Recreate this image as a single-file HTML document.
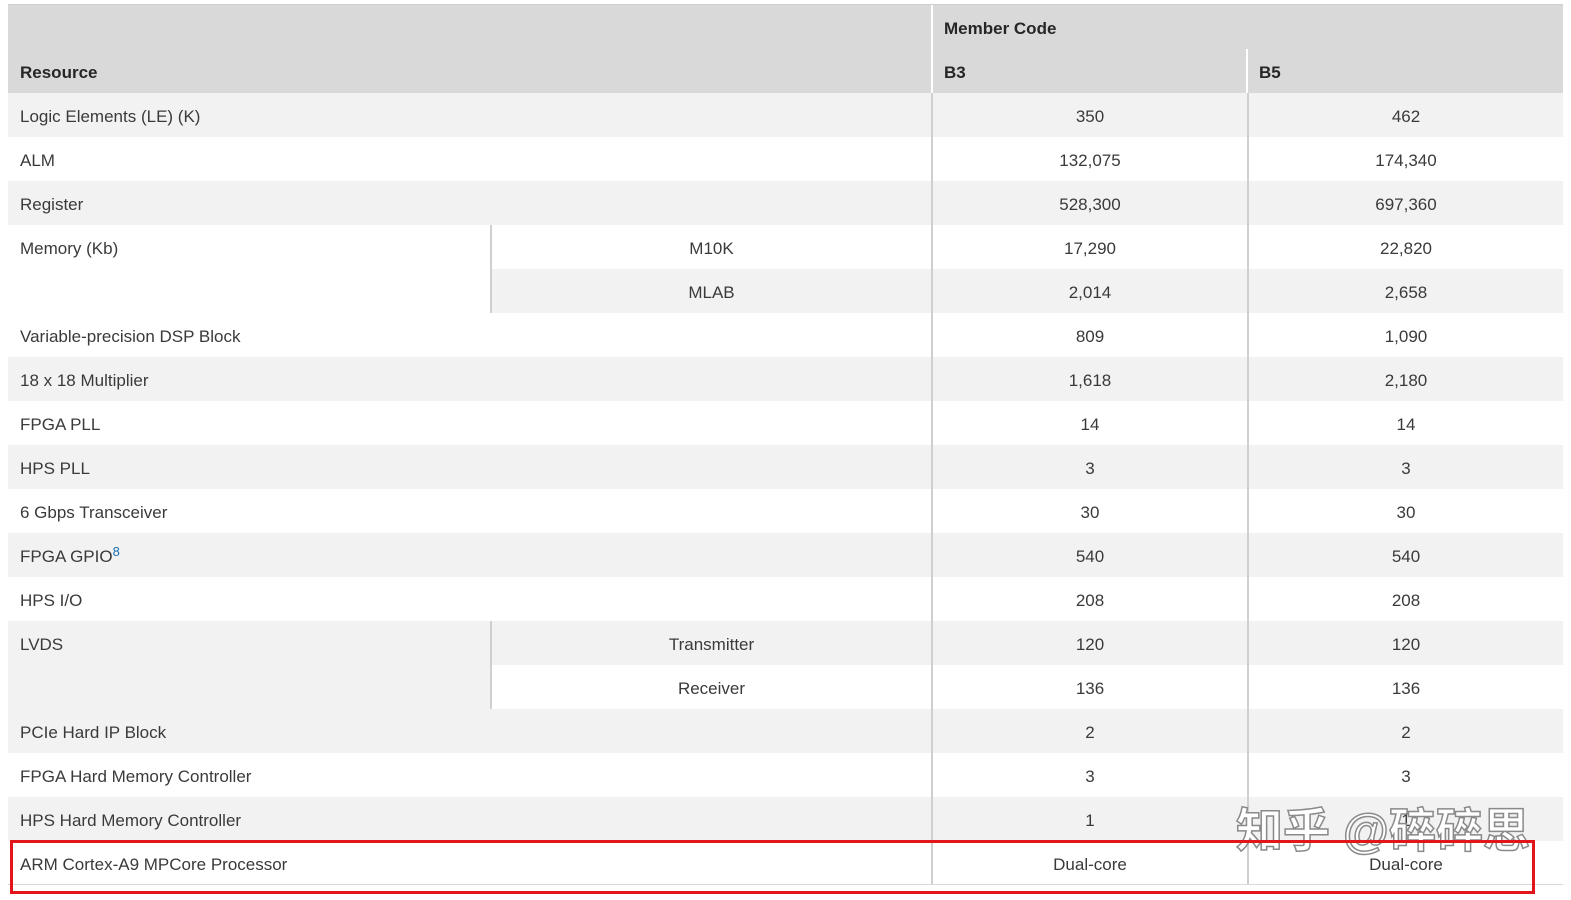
<!DOCTYPE html><html><head><meta charset="utf-8"><style>
body{margin:0;width:1571px;height:900px;background:#fff;font-family:"Liberation Sans",sans-serif;position:relative;overflow:hidden;color:#3a3a3a}
.a{position:absolute;box-sizing:border-box;font-size:17px;line-height:44px;white-space:nowrap;padding-top:2px}
.h{font-weight:bold;color:#262626}
.c{text-align:center}
</style></head><body>
<div class="a" style="left:8px;top:4px;width:1555px;height:1px;background:#cfcfcf;padding:0"></div>
<div class="a" style="left:8px;top:5px;width:1555px;height:88px;background:#d9d9d9"></div>
<div class="a" style="left:931px;top:5px;width:2px;height:88px;background:#fff;padding:0"></div>
<div class="a" style="left:1246px;top:49px;width:2px;height:44px;background:#fff;padding:0"></div>
<div class="a h" style="left:20px;top:49px">Resource</div>
<div class="a h" style="left:944px;top:5px">Member Code</div>
<div class="a h" style="left:944px;top:49px">B3</div>
<div class="a h" style="left:1259px;top:49px">B5</div>
<div id="rows"></div>
<script>
var r=[["Logic Elements (LE) (K)","","350","462"],["ALM","","132,075","174,340"],["Register","","528,300","697,360"],["Memory (Kb)","M10K","17,290","22,820"],[null,"MLAB","2,014","2,658"],["Variable-precision DSP Block","","809","1,090"],["18 x 18 Multiplier","","1,618","2,180"],["FPGA PLL","","14","14"],["HPS PLL","","3","3"],["6 Gbps Transceiver","","30","30"],["FPGA GPIO<sup style=\"color:#1a6fb5;font-size:13px;vertical-align:6px;line-height:0\">8</sup>","","540","540"],["HPS I/O","","208","208"],["LVDS","Transmitter","120","120"],[null,"Receiver","136","136"],["PCIe Hard IP Block","","2","2"],["FPGA Hard Memory Controller","","3","3"],["HPS Hard Memory Controller","","1","1"],["ARM Cortex-A9 MPCore Processor","","Dual-core","Dual-core"]];
var h="";
r.forEach(function(x,i){var y=93+i*44,bg=i%2==0?"#f2f2f2":"#fff";
if(x[0]!==null){var span=(x[1]!=="")?88:44;var w=x[1]!==""?482:923;
h+='<div class="a" style="left:8px;top:'+y+'px;width:'+w+'px;height:'+span+'px;background:'+bg+';padding-left:12px">'+x[0]+'</div>';}
if(x[1]!==""){h+='<div class="a c" style="left:490px;top:'+y+'px;width:441px;height:44px;background:'+bg+';border-left:2px solid #cfcfcf">'+x[1]+'</div>';}
h+='<div class="a c" style="left:931px;top:'+y+'px;width:316px;height:44px;background:'+bg+';border-left:2px solid #cfcfcf">'+x[2]+'</div>';
h+='<div class="a c" style="left:1247px;top:'+y+'px;width:316px;height:44px;background:'+bg+';border-left:2px solid #cfcfcf">'+x[3]+'</div>';});
document.getElementById("rows").innerHTML=h;
</script>
<div class="a" style="left:8px;top:884px;width:1555px;height:1px;background:#d8d8d8;padding:0"></div>
<div class="a" style="left:1236px;top:802px;font-size:47px;line-height:58px;font-weight:bold;color:#fff;-webkit-text-stroke:1.5px #8a8a8a;font-family:'Liberation Sans','Noto Sans CJK SC',sans-serif;padding:0">知乎 @碎碎思</div>
<div class="a" style="left:10px;top:840px;width:1525px;height:54px;border:3px solid #e0161b;padding:0"></div>
</body></html>
